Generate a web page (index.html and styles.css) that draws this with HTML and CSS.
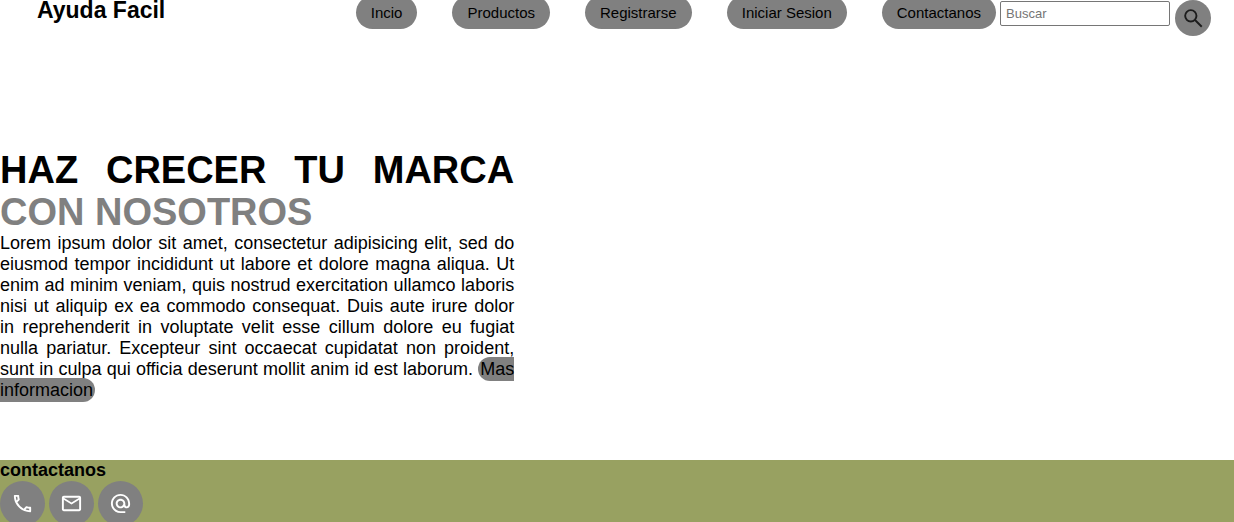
FILE: index.html
```html
<!DOCTYPE html>
<html lang="es">
<head>
<meta charset="utf-8">
<meta name="viewport" content="width=device-width, initial-scale=1">
<title>Ayuda Facil</title>
<link rel="stylesheet" href="styles.css">
</head>
<body>
<header class="header">
  <h2 class="brand">Ayuda Facil</h2>
  <div class="actions">
    <nav>
      <ul class="menu">
        <li><a class="pill" href="#inicio">Incio</a></li>
        <li><a class="pill" href="#productos">Productos</a></li>
        <li><a class="pill" href="#registro">Registrarse</a></li>
        <li><a class="pill" href="#sesion">Iniciar Sesion</a></li>
        <li><a class="pill" href="#contacto">Contactanos</a></li>
      </ul>
    </nav>
    <form class="search">
      <input class="search-input" type="text" placeholder="Buscar" aria-label="Buscar">
      <button class="search-button" type="submit" aria-label="Buscar">
        <svg class="search-icon" viewBox="0 0 24 24" aria-hidden="true"><circle cx="9.2" cy="9.2" r="5.9"/><path d="M13.6 13.6 20.6 20.6"/></svg>
      </button>
    </form>
  </div>
</header>
<main class="hero" id="inicio">
  <div class="hero-text">
    <h1 class="hero-title">HAZ CRECER TU MARCA <span class="hero-accent">CON NOSOTROS</span></h1>
    <p class="hero-copy">Lorem ipsum dolor sit amet, consectetur adipisicing elit, sed do eiusmod tempor incididunt ut labore et dolore magna aliqua. Ut enim ad minim veniam, quis nostrud exercitation ullamco laboris nisi ut aliquip ex ea commodo consequat. Duis aute irure dolor in reprehenderit in voluptate velit esse cillum dolore eu fugiat nulla pariatur. Excepteur sint occaecat cupidatat non proident, sunt in culpa qui officia deserunt mollit anim id est laborum. <a class="more" href="#productos">Mas informacion</a></p>
  </div>
</main>
<footer class="footer" id="contacto">
  <h3 class="footer-title">contactanos</h3>
  <div class="contacts">
    <a class="contact" href="#telefono" aria-label="Telefono">
      <svg class="contact-icon" viewBox="0 0 24 24" aria-hidden="true"><path d="M6.54 5c.06.89.21 1.76.45 2.59l-1.2 1.2c-.41-1.2-.67-2.47-.76-3.79h1.51m9.86 12.02c.85.24 1.72.39 2.6.45v1.49c-1.32-.09-2.59-.35-3.8-.75l1.2-1.19M7.5 3H4c-.55 0-1 .45-1 1 0 9.39 7.61 17 17 17 .55 0 1-.45 1-1v-3.49c0-.55-.45-1-1-1-1.24 0-2.45-.2-3.57-.57a.84.84 0 0 0-.31-.05c-.26 0-.51.1-.71.29l-2.2 2.2a15.149 15.149 0 0 1-6.59-6.59l2.2-2.2c.28-.28.36-.67.25-1.02A11.36 11.36 0 0 1 8.5 4c0-.55-.45-1-1-1z"/></svg>
    </a>
    <a class="contact" href="#correo" aria-label="Correo">
      <svg class="contact-icon" viewBox="0 0 24 24" aria-hidden="true"><path d="M22 6c0-1.100-.9-2-2-2H4c-1.100 0-2 .9-2 2v12c0 1.100.9 2 2 2h16c1.100 0 2-.9 2-2V6zm-2 0-8 5-8-5h16zm0 12H4V8l8 5 8-5v10z"/></svg>
    </a>
    <a class="contact" href="#email" aria-label="Email">
      <svg class="contact-icon" viewBox="0 0 24 24" aria-hidden="true"><path d="M12 2C6.480 2 2 6.480 2 12s4.480 10 10 10h5v-2h-5c-4.340 0-8-3.660-8-8s3.660-8 8-8 8 3.660 8 8v1.430c0 .79-.71 1.570-1.500 1.570s-1.500-.78-1.500-1.570V12c0-2.760-2.240-5-5-5s-5 2.240-5 5 2.240 5 5 5c1.380 0 2.640-.56 3.540-1.470.65.89 1.770 1.470 2.960 1.470 1.970 0 3.500-1.600 3.500-3.570V12c0-5.520-4.480-10-10-10zm0 13c-1.660 0-3-1.340-3-3s1.340-3 3-3 3 1.340 3 3-1.340 3-3 3z"/></svg>
    </a>
  </div>
</footer>
</body>
</html>
```

FILE: styles.css
```css
* {
  box-sizing: border-box;
  margin: 0;
  padding: 0;
}

body {
  font-family: "Liberation Sans", Arial, sans-serif;
  font-size: 18px;
  color: #000;
  background: #fff;
}

a {
  color: inherit;
  text-decoration: none;
}

.header {
  display: flex;
  justify-content: space-between;
  align-items: flex-start;
  padding: 0 23px 0 37px;
}

.brand {
  font-size: 23px;
  line-height: 21px;
}

.actions {
  display: flex;
  align-items: flex-start;
  gap: 4px;
}

.menu {
  display: flex;
  gap: 35px;
  list-style: none;
  font-size: 15px;
  line-height: 26px;
}

.pill {
  padding: 8px 15px;
  border-radius: 20px;
  background: #808080;
}

.search {
  display: flex;
  align-items: flex-start;
  gap: 5px;
}

.search-input {
  width: 170px;
  height: 25px;
  margin-top: 1px;
  padding: 0 5px;
  border: 1px solid #767676;
  border-radius: 2px;
  font-family: inherit;
  font-size: 13px;
}

.search-input::placeholder {
  color: #757575;
}

.search-button {
  display: flex;
  align-items: center;
  justify-content: center;
  width: 36px;
  height: 36px;
  border: 0;
  border-radius: 50%;
  background: #808080;
}

.search-icon {
  width: 23px;
  height: 23px;
  fill: none;
  stroke: #1c1c1c;
  stroke-width: 2;
}

.hero {
  display: grid;
  grid-template-columns: 5fr 7fr;
  padding: 113px 0 59px;
}

.hero-text {
  text-align: justify;
}

.hero-title {
  font-size: 38px;
  line-height: 42px;
}

.hero-accent {
  color: #808080;
}

.more {
  padding: 2px;
  border-radius: 12px;
  background: #808080;
}

.footer {
  background: #98a161;
}

.footer-title {
  font-size: 18px;
  line-height: 21px;
}

.contacts {
  display: flex;
  gap: 4px;
}

.contact {
  display: flex;
  align-items: center;
  justify-content: center;
  width: 45px;
  height: 45px;
  border-radius: 50%;
  background: #808080;
}

.contact-icon {
  width: 23px;
  height: 23px;
  fill: #fff;
}
```
